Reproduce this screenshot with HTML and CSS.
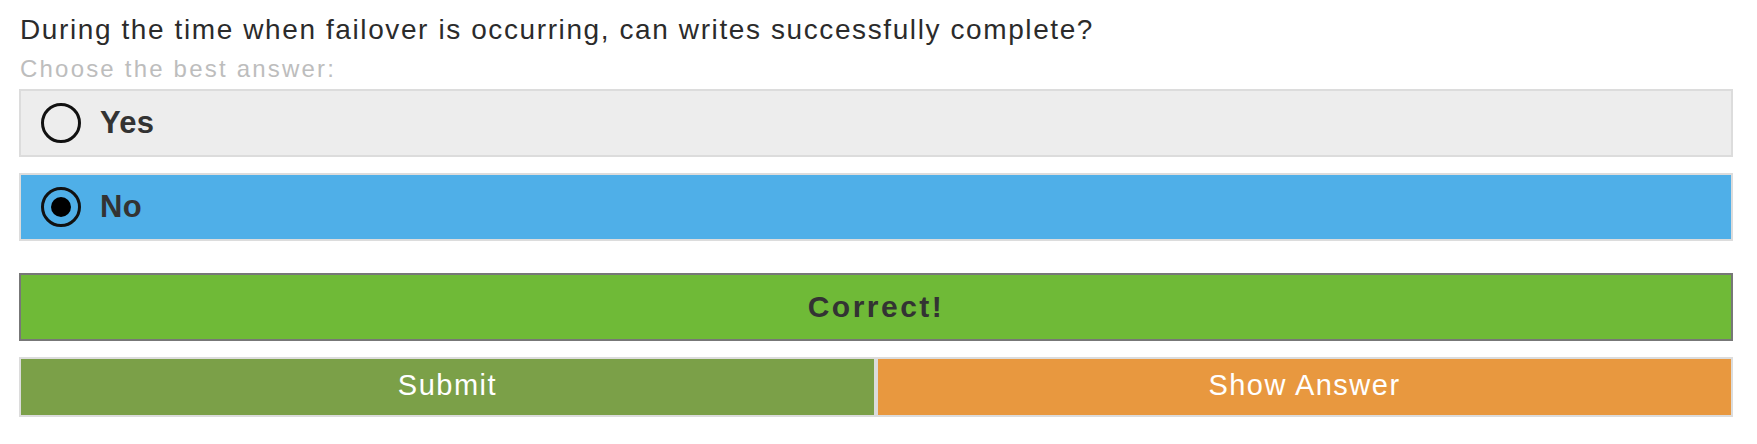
FILE: index.html
```html
<!DOCTYPE html>
<html lang="en">
<head>
<meta charset="utf-8">
<title>Quiz</title>
<link rel="stylesheet" href="styles.css">
</head>
<body>
<div class="quiz">
  <div class="question">During the time when failover is occurring, can writes successfully complete?</div>
  <div class="hint">Choose the best answer:</div>
  <div class="options">
    <label class="option">
      <span class="radio"></span>
      <span class="option-text">Yes</span>
    </label>
    <label class="option option-selected">
      <span class="radio radio-checked"></span>
      <span class="option-text">No</span>
    </label>
  </div>
  <div class="result">Correct!</div>
  <div class="actions">
    <button class="btn btn-submit">Submit</button>
    <button class="btn btn-show">Show Answer</button>
  </div>
</div>
</body>
</html>
```

FILE: styles.css
```css
* {
  box-sizing: border-box;
}

html, body {
  margin: 0;
  padding: 0;
  background: #ffffff;
}

body {
  font-family: "Liberation Sans", Arial, Helvetica, sans-serif;
  color: #2e2e2e;
}

.quiz {
  margin: 0 24px 0 19px;
  padding-top: 12px;
}

.question {
  font-size: 28px;
  line-height: 36px;
  letter-spacing: 1.6px;
  color: #2b2b2b;
  padding-left: 1px;
  white-space: nowrap;
}

.hint {
  font-size: 24px;
  line-height: 41px;
  letter-spacing: 2.2px;
  color: #bdbdbd;
  padding-left: 1px;
}

.options {
  display: flex;
  flex-direction: column;
  gap: 16px;
}

.option {
  display: flex;
  align-items: center;
  gap: 19px;
  height: 68px;
  padding-left: 20px;
  border: 2px solid #dcdcdc;
  background: #ededed;
}

.option-selected {
  background: #4fafe8;
}

.radio {
  width: 40px;
  height: 40px;
  border: 3px solid #111;
  border-radius: 50%;
  display: flex;
  align-items: center;
  justify-content: center;
  flex: none;
}

.radio-checked::after {
  content: "";
  width: 20px;
  height: 20px;
  border-radius: 50%;
  background: #000;
}

.option-text {
  font-size: 31px;
  font-weight: bold;
  letter-spacing: 0.3px;
  color: #333;
}

.result {
  margin-top: 32px;
  height: 68px;
  border: 2px solid #777;
  background: #6fba37;
  display: flex;
  align-items: center;
  justify-content: center;
  font-size: 30px;
  font-weight: bold;
  letter-spacing: 2.5px;
  color: #333;
}

.actions {
  margin-top: 16px;
  display: flex;
}

.btn {
  flex: 1;
  height: 60px;
  border: 2px solid #dcdcdc;
  margin: 0;
  padding: 0 0 4px 0;
  font-family: "Liberation Sans", Arial, Helvetica, sans-serif;
  font-size: 29px;
  letter-spacing: 1.5px;
  color: #ffffff;
  cursor: pointer;
}

.btn-submit {
  background: #7ba048;
}

.btn-show {
  background: #e8983f;
}
```
